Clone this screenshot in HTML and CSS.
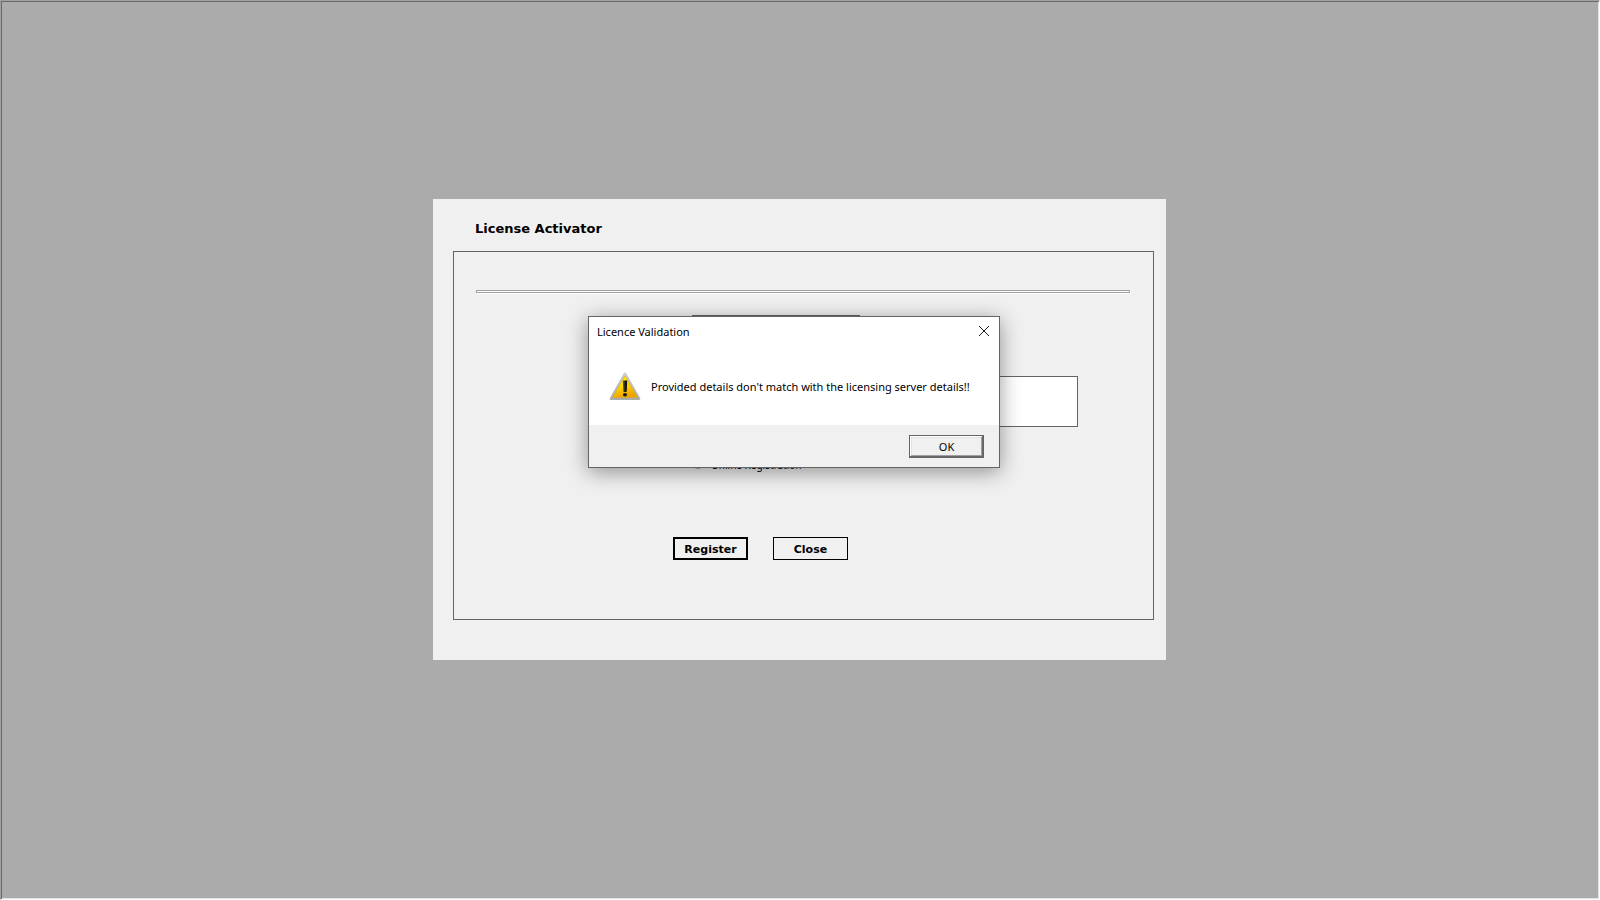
FILE: index.html
```html
<!DOCTYPE html>
<html lang="en">
<head>
  <meta charset="UTF-8">
  <meta name="viewport" content="width=device-width, initial-scale=1.0">
  <title>License Activator</title>
  <link rel="stylesheet" href="styles.css">
</head>
<body>
  <main class="desktop">
    <div class="window">
      <h1>License Activator</h1>
      <form class="group">
        <hr class="divider">
        <div class="fields">
          <input type="text" class="field" aria-label="Licence name">
          <textarea class="field details" aria-label="Licence details"></textarea>
          <label class="option">
            <input type="radio" name="mode"> Online Registration
          </label>
        </div>
        <div class="actions">
          <button type="button" class="btn default">Register</button>
          <button type="button" class="btn">Close</button>
        </div>
      </form>

      <div class="dialog" role="alertdialog" aria-labelledby="dialogTitle" aria-describedby="dialogText">
        <div class="dialog-header">
          <h2 id="dialogTitle">Licence Validation</h2>
          <button type="button" class="dialog-close" aria-label="Close">
            <svg width="12" height="12" viewBox="0 0 12 12" aria-hidden="true">
              <path d="M1 1l10 10M11 1L1 11" stroke="#000" stroke-width="0.9" fill="none"/>
            </svg>
          </button>
        </div>
        <div class="dialog-body">
          <svg class="warning" width="32" height="30" viewBox="0 -1 32 30" aria-hidden="true">
            <defs>
              <linearGradient id="edge" x1="0" y1="0" x2="0" y2="1">
                <stop offset="0" stop-color="#d0d0d0"/>
                <stop offset="1" stop-color="#a8acb0"/>
              </linearGradient>
              <linearGradient id="fill" x1="0" y1="0" x2="0.3" y2="1">
                <stop offset="0" stop-color="#fff200"/>
                <stop offset="0.5" stop-color="#fbe000"/>
                <stop offset="0.7" stop-color="#f8c400"/>
                <stop offset="1" stop-color="#f0a400"/>
              </linearGradient>
              <linearGradient id="mark" x1="0" y1="0" x2="1" y2="0">
                <stop offset="0" stop-color="#6a6a50"/>
                <stop offset="0.5" stop-color="#202020"/>
                <stop offset="1" stop-color="#000"/>
              </linearGradient>
            </defs>
            <path d="M16 .6q1 0 1.600 1.200l13.600 24.400q.7 1.700-1.200 1.800H2q-1.900-.1-1.200-1.800L14.400 1.800Q15 .6 16 .6z" fill="url(#edge)"/>
            <path d="M16 3.800L28.600 25.600H3.400z" fill="url(#fill)" stroke="#d8a820" stroke-width="0.6"/>
            <path d="M13.800 8.500h4.400l-.5 11q-1.700 1-3.400 0z" fill="url(#mark)"/>
            <ellipse cx="16" cy="22.800" rx="2.100" ry="1.800" fill="#1c1c1c"/>
          </svg>
          <p id="dialogText">Provided details don't match with the licensing server details!!</p>
        </div>
        <div class="dialog-footer">
          <button type="button" class="ok">OK</button>
        </div>
      </div>
    </div>
  </main>
</body>
</html>
```
FILE: styles.css
```css
* {
  box-sizing: border-box;
}
body {
  margin: 0;
  background: #ababab;
  color: #000;
  font-family: "DejaVu Sans", Verdana, sans-serif;
  font-size: 11px;
}
.desktop {
  display: flex;
  justify-content: center;
  align-items: flex-start;
  min-height: 100vh;
  padding: 198px 21px 20px 20px;
  border: 1px solid;
  border-color: #a0a0a0 #fff #fff #a0a0a0;
  box-shadow: inset 1px 1px #696969, inset -1px -1px #e3e3e3;
}
.window {
  position: relative;
  width: 733px;
  padding: 20px 12px 40px 20px;
  background: #f0f0f0;
}
h1 {
  margin: 0 0 12px 22px;
  font-size: 13px;
  line-height: 20px;
}
.group {
  padding: 38px 23px 59px 22px;
  border: 1px solid #646464;
}
.divider {
  height: 3px;
  margin: 0 0 22px;
  border: 1px solid #a0a0a0;
  background: #fff;
  box-shadow: 1px 1px #fff;
}
.fields {
  display: flex;
  flex-direction: column;
  align-items: flex-start;
  margin: 0 52px 0 216px;
}
.field {
  width: 168px;
  height: 25px;
  border: 1px solid #646464;
  background: #fff;
}
.details {
  width: 100%;
  height: 51px;
  margin: 36px 0 30px;
  resize: none;
}
.option {
  display: flex;
  align-items: center;
  gap: 7px;
  height: 16px;
  font-family: "Noto Sans", Tahoma, sans-serif;
  font-size: 10px;
}
.option input {
  width: 12px;
  height: 12px;
  margin: 0 0 4px;
  border: 1px solid #a0a0a0;
  border-radius: 50%;
  background: #fff;
  appearance: none;
}
.option input:checked {
  background: radial-gradient(#000 35%, #fff 40%);
}
.actions {
  display: flex;
  gap: 25px;
  margin: 64px 0 0 197px;
}
.btn {
  width: 75px;
  height: 23px;
  padding: 1px 0 0;
  border: 1px solid #000;
  background: #f0f0f0;
  color: #000;
  font: bold 11px "DejaVu Sans", Verdana, sans-serif;
}
.btn.default {
  border-width: 2px;
}
.dialog {
  position: absolute;
  top: 117px;
  left: 155px;
  width: 412px;
  border: 1px solid #646464;
  background: #fff;
  box-shadow: 0 4px 20px rgba(0, 0, 0, 0.4);
  font-family: "Noto Sans", "Segoe UI", sans-serif;
}
.dialog-header {
  display: flex;
  justify-content: space-between;
  align-items: flex-start;
  padding: 0 8px;
}
h2 {
  margin: 0;
  font-size: 11px;
  font-weight: normal;
  line-height: 30px;
}
.dialog-close {
  display: flex;
  padding: 8px 1px;
  border: 0;
  background: none;
}
.dialog-body {
  display: flex;
  align-items: center;
  gap: 10px;
  height: 78px;
  padding: 0 20px;
}
.dialog-body p {
  margin: 0;
  white-space: nowrap;
}
.dialog-footer {
  display: flex;
  justify-content: flex-end;
  padding: 10px 15px 9px;
  background: #f0f0f0;
}
.ok {
  width: 75px;
  height: 23px;
  padding: 0 0 1px;
  border: 1px solid #646464;
  background: #f0f0f0;
  box-shadow: inset -1px -1px #696969, inset 1px 1px #fff, inset -2px -2px #a0a0a0, inset 2px 2px #e3e3e3;
  color: #000;
  font: 11px "Noto Sans", "Segoe UI", sans-serif;
}
```
